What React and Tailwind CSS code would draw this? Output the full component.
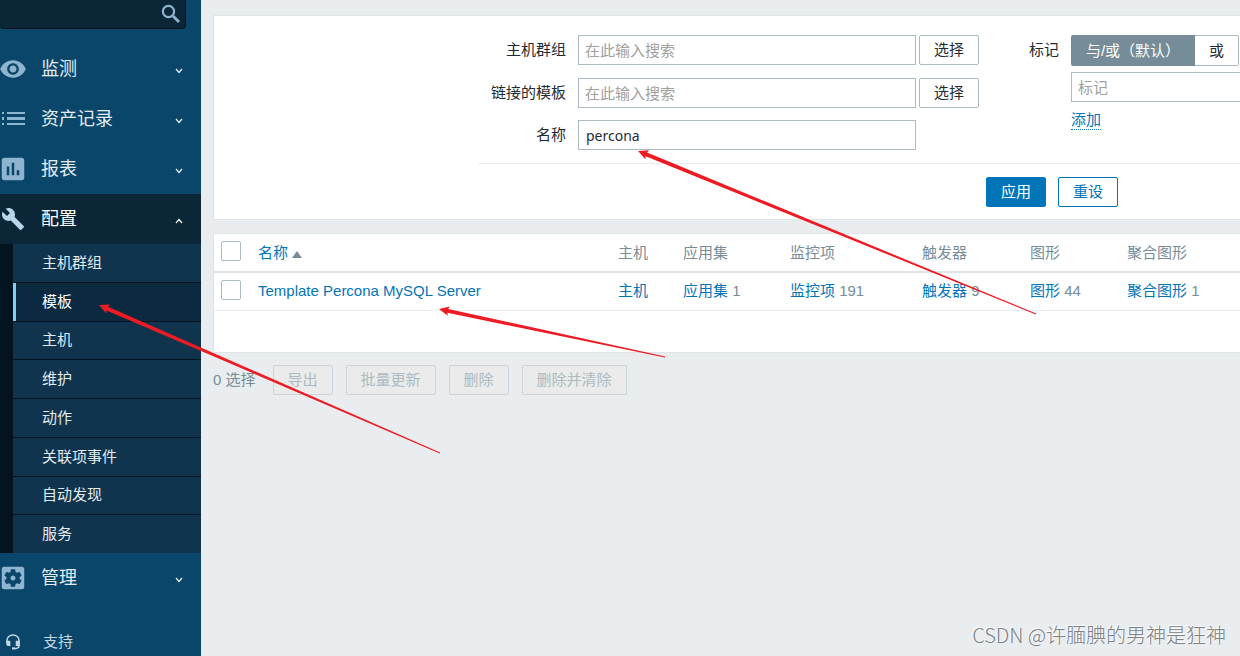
import { useState } from "react";
import { MdAssessment, MdSettingsApplications, MdVisibility } from "react-icons/md";

const configItems = ["主机群组", "模板", "主机", "维护", "动作", "关联项事件", "自动发现", "服务"];

const columns = ["主机", "应用集", "监控项", "触发器", "图形", "聚合图形"];

const templates = [
  {
    name: "Template Percona MySQL Server",
    counts: ["", "1", "191", "9", "44", "1"],
  },
];

const bulkActions = ["导出", "批量更新", "删除", "删除并清除"];

const arrows = [
  { tip: [99, 305], tail: [440, 453] },
  { tip: [638, 151], tail: [1036, 314] },
  { tip: [439, 309], tail: [665, 357] },
];

function SearchIcon() {
  return (
    <svg width="20" height="20" viewBox="0 0 20 20" fill="none" stroke="currentColor" aria-hidden="true">
      <circle cx="7.5" cy="7.5" r="5.6" strokeWidth="2.2" />
      <path d="M12 12l6 6" strokeWidth="2.8" />
    </svg>
  );
}

function ListIcon() {
  return (
    <svg width="24" height="14" viewBox="0 0 24 14" fill="currentColor" aria-hidden="true">
      <path d="M1 0h2v2H1zM6 0h18v2H6zM1 5h2v3H1zM6 5h18v3H6zM1 11h2v2H1zM6 11h18v2H6z" />
    </svg>
  );
}

function WrenchIcon() {
  return (
    <svg width="24" height="24" viewBox="0 0 24 24" fill="currentColor" aria-hidden="true">
      <path d="M22.7 19l-9.1-9.1c.9-2.3.4-5-1.5-6.9-2-2-5-2.4-7.4-1.3L9 6 6 9 1.6 4.7C.4 7.1.9 10.1 2.9 12.1c1.9 1.9 4.6 2.4 6.9 1.5l9.1 9.1c.4.4 1 .4 1.4 0l2.3-2.3c.5-.4.5-1.1.1-1.4z" />
    </svg>
  );
}

function HeadsetIcon() {
  return (
    <svg width="14" height="16" viewBox="0 0 14 16" fill="none" stroke="currentColor" aria-hidden="true">
      <path d="M1 9V6.5a6 5.6 0 0 1 12 0V12q0 2.6-5.5 2.6" strokeWidth="1.5" />
      <path d="M.3 6.8h4V12H2Q.3 12 .3 10.300zM13.700 6.800h-4V12h4z" fill="currentColor" stroke="none" />
      <path d="M6 14.400h3" strokeWidth="2" />
    </svg>
  );
}

function Chevron({ up }) {
  return (
    <svg
      className={`ml-auto mt-1 ${up ? "rotate-180" : ""}`}
      width="8"
      height="6"
      viewBox="0 0 8 6"
      fill="none"
      stroke="currentColor"
      strokeWidth="1.3"
      aria-hidden="true"
    >
      <path d="M1 1l3 3.4L7 1" />
    </svg>
  );
}

function MenuItem({ icon, label, open }) {
  return (
    <button
      type="button"
      className={`flex h-[50px] w-full items-center pr-[18px] pb-px text-lg ${open ? "bg-[#0a2637] text-white" : "text-[#e3edf3]"}`}
    >
      <span className={`flex w-[26px] shrink-0 justify-center ${open ? "text-[#b8d6ea]" : "text-[#8fb4cf]"}`}>
        {icon}
      </span>
      <span className="ml-[15px]">{label}</span>
      <Chevron up={open} />
    </button>
  );
}

function Sidebar() {
  return (
    <aside className="flex w-[201px] shrink-0 flex-col bg-[#0a466a]">
      <div className="mr-[15px] flex h-[29px] items-center rounded-b border-r border-b border-[#02111c] bg-[#0a2637] pr-1">
        <input type="search" aria-label="搜索" className="min-w-0 flex-1 bg-transparent px-2 text-white outline-none" />
        <button type="button" aria-label="搜索" className="text-[#8fb4cf]">
          <SearchIcon />
        </button>
      </div>

      <nav className="mt-[15px]">
        <MenuItem icon={<MdVisibility size={28} className="shrink-0" />} label="监测" />
        <MenuItem icon={<ListIcon />} label="资产记录" />
        <MenuItem icon={<MdAssessment size={30} className="shrink-0" />} label="报表" />
        <MenuItem icon={<WrenchIcon />} label="配置" open />
        <ul className="grid h-[309px] grid-rows-8 gap-px bg-[#04141f] pl-[13px]">
          {configItems.map((item) => (
            <li key={item} className="flex">
              <a
                href="#"
                className={`flex flex-1 items-center ${
                  item === "模板"
                    ? "border-l-[3px] border-[#82cdff] bg-[#0b2a3f] pl-[26px] text-white"
                    : "bg-[#10344d] pl-[29px] text-[#e3edf3]"
                }`}
              >
                {item}
              </a>
            </li>
          ))}
        </ul>
        <MenuItem icon={<MdSettingsApplications size={30} className="shrink-0" />} label="管理" />
      </nav>

      <a href="#" className="mt-6 flex h-[30px] items-center text-[#c5d7e2]">
        <span className="flex w-[26px] justify-center">
          <HeadsetIcon />
        </span>
        <span className="ml-[17px]">支持</span>
      </a>
    </aside>
  );
}

function SelectRow({ id, label }) {
  return (
    <>
      <label htmlFor={id} className="pt-1 text-right">
        {label}
      </label>
      <div className="flex gap-[3px]">
        <input
          id={id}
          type="text"
          placeholder="在此输入搜索"
          className="h-[30px] w-[338px] border border-[#acbbc2] px-[6px] placeholder:text-[#a0a0a0]"
        />
        <button
          type="button"
          className="h-[30px] shrink-0 rounded-xs border border-[#acbbc2] px-[14px] whitespace-nowrap"
        >
          选择
        </button>
      </div>
    </>
  );
}

function Filter() {
  const [name, setName] = useState("percona");

  return (
    <form className="border border-r-0 border-[#dfe4e7] bg-white pt-[19px] pb-3">
      <div className="ml-[264px] flex border-b border-[#ebeef0] pb-[13px]">
        <div className="grid shrink-0 grid-cols-[88px_401px] grid-rows-[31px_30px_30px] gap-3">
          <SelectRow id="groups" label="主机群组" />
          <SelectRow id="linked" label="链接的模板" />
          <label htmlFor="name" className="pt-1 text-right">
            名称
          </label>
          <input
            id="name"
            type="text"
            value={name}
            onChange={(e) => setName(e.target.value)}
            className="h-[30px] w-[338px] border border-[#acbbc2] px-[7px] font-['Noto_Sans','Noto_Sans_CJK_SC',sans-serif] text-sm"
          />
        </div>

        <div className="ml-[50px] flex shrink-0 gap-3">
          <span className="pt-1">标记</span>
          <div className="flex flex-col items-start">
            <div className="flex h-[31px]">
              <button type="button" className="w-[124px] rounded-l-xs bg-[#768d99] whitespace-nowrap text-white">
                与/或（默认）
              </button>
              <button type="button" className="w-11 rounded-r-xs border border-l-0 border-[#acbbc2]">
                或
              </button>
            </div>
            <input
              type="text"
              aria-label="标记"
              placeholder="标记"
              className="mt-[6px] h-[30px] w-[252px] border border-[#acbbc2] px-[6px] placeholder:text-[#a0a0a0]"
            />
            <button type="button" className="mt-2 h-5 border-b border-dotted border-[#0275b8] leading-5 text-[#0275b8]">
              添加
            </button>
          </div>
        </div>
      </div>

      <div className="mt-[13px] flex justify-center gap-3 pl-[650px]">
        <button type="submit" className="h-[30px] shrink-0 rounded-xs border border-[#0275b8] bg-[#0275b8] px-[14px] text-white">
          应用
        </button>
        <button type="reset" className="h-[30px] shrink-0 rounded-xs border border-[#0275b8] px-[14px] text-[#0275b8]">
          重设
        </button>
      </div>
    </form>
  );
}

function Checkbox({ label }) {
  return (
    <input
      type="checkbox"
      aria-label={label}
      className="block size-5 appearance-none rounded-xs border border-[#acbbc2] bg-white checked:bg-[#0275b8]"
    />
  );
}

function TemplateTable() {
  return (
    <div className="mt-[13px] border border-r-0 border-[#dfe4e7] bg-white pb-[41px]">
      <table className="w-full table-fixed border-collapse text-left">
        <colgroup>
          <col className="w-[39px]" />
          <col />
          <col className="w-[65px]" />
          <col className="w-[107px]" />
          <col className="w-[132px]" />
          <col className="w-[108px]" />
          <col className="w-[97px]" />
          <col className="w-[117px]" />
        </colgroup>
        <thead className="border-b-2 border-[#dfe4e7] text-[#768d99]">
          <tr className="h-[38px]">
            <th className="pb-[3px] pl-[7px]">
              <Checkbox label="全选" />
            </th>
            <th className="pl-[5px] font-normal">
              <a href="#" className="flex items-center gap-1 text-[#0275b8]">
                名称
                <span className="mt-1 border-x-5 border-b-7 border-x-transparent border-b-[#768d99]" />
              </a>
            </th>
            {columns.map((column) => (
              <th key={column} className="pl-1 font-normal whitespace-nowrap">
                {column}
              </th>
            ))}
          </tr>
        </thead>
        <tbody>
          {templates.map((template) => (
            <tr key={template.name} className="h-[38px] border-b border-[#ebeef0]">
              <td className="pb-[3px] pl-[7px]">
                <Checkbox label={template.name} />
              </td>
              <td className="pl-[5px]">
                <a href="#" className="text-[#0275b8]">
                  {template.name}
                </a>
              </td>
              {columns.map((column, i) => (
                <td key={column} className="pl-1 whitespace-nowrap text-[#768d99]">
                  <a href="#" className="text-[#0275b8]">
                    {column}
                  </a>{" "}
                  {template.counts[i]}
                </td>
              ))}
            </tr>
          ))}
        </tbody>
      </table>
    </div>
  );
}

// Tapered red pointer with a notched head
function Arrow({ tip, tail }) {
  const dx = tail[0] - tip[0];
  const dy = tail[1] - tip[1];
  const length = Math.hypot(dx, dy);
  const at = (along, across) => {
    const x = tip[0] + (dx * along - dy * across) / length;
    const y = tip[1] + (dy * along + dx * across) / length;
    return `${x.toFixed(1)},${y.toFixed(1)}`;
  };
  const points = [at(0, 0), at(10, 4.8), at(9, 2), at(length, 0.5), at(length, -0.5), at(9, -2), at(10, -4.8)];

  return <polygon points={points.join(" ")} fill="#ed1c24" />;
}

export default function App() {
  return (
    <div className="relative flex min-h-screen overflow-hidden bg-[#e9edf0] font-['Liberation_Sans','Noto_Sans_CJK_SC',sans-serif] text-[15px] leading-[22px] text-[#1f2c33]">
      <Sidebar />

      <main className="min-w-0 flex-1 overflow-hidden pt-[15px] pl-3">
        <Filter />
        <TemplateTable />
        <div className="mt-3 flex items-center gap-[13px]">
          <span className="mr-1 text-[#768d99]">0 选择</span>
          {bulkActions.map((action) => (
            <button
              key={action}
              type="button"
              disabled
              className="h-[30px] rounded-xs border border-[#ccd5d9] bg-[#ebebeb] px-[14px] text-[#acbbc2]"
            >
              {action}
            </button>
          ))}
        </div>
      </main>

      <svg className="pointer-events-none absolute top-0 left-0" width="1240" height="656" aria-hidden="true">
        {arrows.map((arrow) => (
          <Arrow key={arrow.tip[0]} {...arrow} />
        ))}
      </svg>

      <p className="pointer-events-none absolute right-[14px] bottom-2 font-['Noto_Sans_CJK_SC',sans-serif] text-xl font-light whitespace-nowrap text-[#7d8184] [text-shadow:-1px_-1px_0_#fff]">
        CSDN @许腼腆的男神是狂神
      </p>
    </div>
  );
}
